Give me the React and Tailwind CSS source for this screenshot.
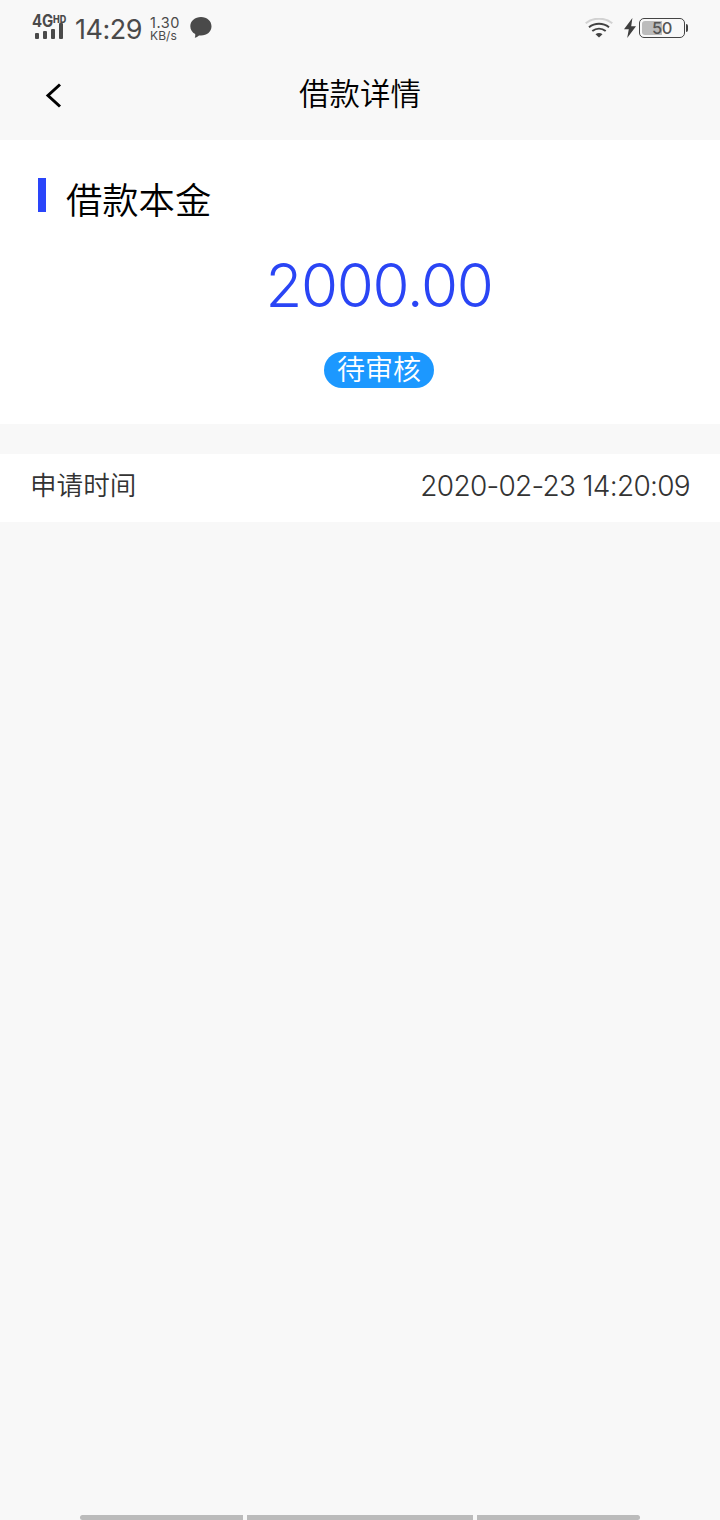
const SignalIcon = () => (
    <svg width="30" height="16" viewBox="0 0 30 16" fill="#4a4a4a">
        <rect x="0" y="10" width="4" height="6" rx="1" />
        <rect x="8" y="8" width="4" height="8" rx="1" />
        <rect x="16" y="6" width="4" height="10" rx="1" />
        <rect x="24" y="0" width="4" height="16" rx="1" />
    </svg>
);

const ChatIcon = () => (
    <svg width="22" height="21" viewBox="0 0 22 21" fill="#4a4a4a">
        <path d="M11 0C17 0 21.5 4 21.5 9.3C21.5 14.7 17 18.6 11 18.6C10.3 18.6 9.6 18.6 9 18.5C7.8 19.7 6.3 20.5 4.8 20.8C5.3 19.7 5.4 18.4 5.2 17.1C2.2 15.5 0.3 12.7 0.3 9.3C0.3 4 5 0 11 0Z" />
    </svg>
);

const WifiIcon = () => (
    <svg width="28" height="20" viewBox="0 0 28 20" fill="none" strokeWidth="2">
        <path d="M0.7 5.3C8.4 -0.9 19.6 -0.9 27.3 5.3" stroke="#d2d2d2" />
        <path d="M4 9.2C9.9 4.6 18.1 4.6 24 9.2" stroke="#424242" />
        <path d="M7.3 13C11.3 9.9 16.7 9.9 20.7 13" stroke="#424242" />
        <path d="M10.5 16.2C12.5 14.6 15.5 14.6 17.5 16.2L14 19.5Z" fill="#424242" />
    </svg>
);

const BoltIcon = () => (
    <svg width="12" height="20" viewBox="0 0 12 20" fill="#3f3f3f">
        <path d="M8.4 0L0 11.2H4.8L3.2 20L12 8.3H7.2Z" />
    </svg>
);

const Battery = () => (
    <div className="flex items-center">
        <div className="relative flex h-5 w-[46px] items-center justify-center rounded-[5px] border border-[#444] p-0.5">
            <div className="absolute top-[2px] left-[2px] h-[14px] w-[20px] rounded-l-[3px] bg-[#bcbcbc]" />
            <span className="relative text-[16.5px] leading-4 font-medium tracking-[-0.5px] text-[#555]">50</span>
        </div>
        <div className="ml-px h-2 w-[2px] rounded-r-sm bg-[#444]" />
    </div>
);

const StatusBar = () => (
    <div className="flex h-14 items-start justify-between pr-8 pl-8 text-[#4a4a4a]">
        <div className="flex">
            <div className="mt-[14px] w-[43px]">
                <div className="flex h-[9px] items-start whitespace-nowrap">
                    <span className="w-[21px] origin-left scale-x-[0.88] text-[17px] leading-[15px] font-bold tracking-[-0.2px]">4G</span>
                    <span className="origin-left scale-x-90 text-[10px] leading-[10px] font-extrabold">HD</span>
                </div>
                <div className="ml-[3px]">
                    <SignalIcon />
                </div>
            </div>
            <span className="mt-[14px] w-[75px] text-[27px] leading-8 tracking-[-0.5px]">14:29</span>
            <div className="mt-4 w-[40px] whitespace-nowrap">
                <div className="text-[14.5px] leading-[13px] tracking-[0.5px]">1.30</div>
                <div className="text-[12px] leading-[13px] tracking-[0.1px]">KB/s</div>
            </div>
            <div className="mt-[17px]">
                <ChatIcon />
            </div>
        </div>
        <div className="mt-[18px] flex">
            <WifiIcon />
            <div className="mr-[3px] ml-[11px]">
                <BoltIcon />
            </div>
            <Battery />
        </div>
    </div>
);

const Header = () => (
    <header className="grid h-[84px] grid-cols-3 items-start">
        <button className="mt-[26px] ml-[45px] w-6">
            <svg width="17" height="26" viewBox="0 0 17 26" fill="none" stroke="#000" strokeWidth="3">
                <path d="M15 2.5L3 13.5L15 24.5" />
            </svg>
        </button>
        <h1 className="mt-[18px] text-center text-[30.5px] leading-10 font-[350] text-black">借款详情</h1>
    </header>
);

const LoanAmount = () => (
    <section className="h-[284px] bg-white pt-[38px]">
        <div className="flex items-start pl-[38px]">
            <div className="h-[34px] w-2 bg-[#2a45fa]" />
            <h2 className="ml-5 text-[36.3px] leading-[47px] font-[350] text-black">借款本金</h2>
        </div>
        <div className="mt-5 flex flex-col items-center pl-[38px]">
            <span className="text-[60px] leading-[80px] font-light tracking-[-1.3px] text-[#2a45f5]">2000.00</span>
            <span className="mt-[27px] h-9 w-[110px] rounded-full bg-[#1c98ff] text-center text-[28px] leading-[37px] font-[350] text-white">
                待审核
            </span>
        </div>
    </section>
);

const InfoRow = ({ label, value }) => (
    <div className="mt-[30px] flex h-[68px] justify-between bg-white pr-[30px] pl-[30px] text-[#333]">
        <span className="text-[26.6px] leading-[62px] font-[350]">{label}</span>
        <span className="text-[28px] leading-[64px] font-light tracking-[-0.7px]">{value}</span>
    </div>
);

const HomeIndicator = () => (
    <div className="mt-auto flex h-[5px] gap-1 px-20">
        <div className="w-[163px] rounded-l-full bg-[#bbb]" />
        <div className="flex-1 bg-[#bbb]" />
        <div className="w-[163px] rounded-r-full bg-[#bbb]" />
    </div>
);

const App = () => {
    return (
        <div className="flex h-[1520px] w-[720px] flex-col bg-[#f8f8f8] font-[Inter,'Noto_Sans_CJK_SC',sans-serif]">
            <StatusBar />
            <Header />
            <LoanAmount />
            <InfoRow label="申请时间" value="2020-02-23 14:20:09" />
            <HomeIndicator />
        </div>
    );
};

export default App;
